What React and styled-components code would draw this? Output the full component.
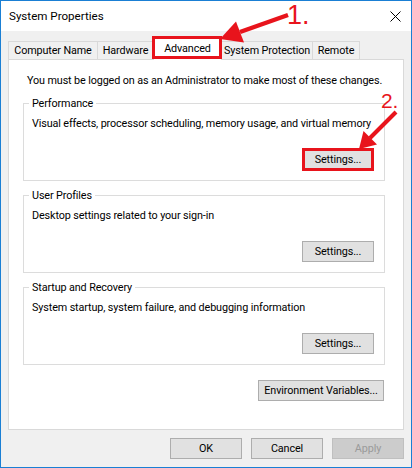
import React from "react";
import styled, { createGlobalStyle } from "styled-components";

const red = "#e8141c";
const uiFont = `Roboto, "Liberation Sans", Arial, sans-serif`;

const Global = createGlobalStyle`
  html, body {
    margin: 0;
    padding: 0;
    background: #ffffff;
  }
`;

const Window = styled.div`
  position: relative;
  width: 412px;
  height: 468px;
  box-sizing: border-box;
  border: 1px solid #1a7fd4;
  display: flex;
  flex-direction: column;
  background: #f0f0f0;
  font-family: ${uiFont};
  font-size: 10.8px;
  letter-spacing: -0.12px;
  color: #000;
`;

const TitleBar = styled.div`
  height: 30px;
  background: #ffffff;
  display: flex;
  align-items: center;
  justify-content: space-between;
  padding: 0 10px 0 8px;
`;

const Title = styled.span`
  font-size: 11.6px;
  letter-spacing: 0;
  line-height: 16px;
`;

const Body = styled.div`
  flex: 1;
  display: flex;
  flex-direction: column;
  padding: 6px 7px 0;
`;

const TabStrip = styled.div`
  position: relative;
  z-index: 1;
  display: flex;
  align-items: flex-end;
  height: 22px;
`;

const Tab = styled.div`
  position: relative;
  box-sizing: border-box;
  width: ${(p) => p.$w}px;
  height: ${(p) => (p.$active ? 23 : 18)}px;
  margin-left: -1px;
  margin-bottom: ${(p) => (p.$active ? -1 : 0)}px;
  padding-bottom: ${(p) => (p.$active ? 2 : 0)}px;
  border: 1px solid #d9d9d9;
  border-bottom: none;
  background: ${(p) => (p.$active ? "#ffffff" : "#f0f0f0")};
  z-index: ${(p) => (p.$active ? 2 : 1)};
  display: flex;
  align-items: center;
  justify-content: center;
  white-space: nowrap;

  &:first-child {
    margin-left: 0;
  }

  ${(p) =>
    p.$mark &&
    `
    &::after {
      content: "";
      position: absolute;
      top: -2px;
      left: -2px;
      right: -1px;
      bottom: 1px;
      border: 3px solid ${red};
    }
  `}
`;

const Panel = styled.div`
  box-sizing: border-box;
  height: 371px;
  background: #ffffff;
  border: 1px solid #d9d9d9;
  padding: 13px 18px 0 14px;
`;

const Notice = styled.p`
  margin: 0 0 7px;
  padding-left: 4px;
  line-height: 16px;
  white-space: nowrap;
`;

const Group = styled.fieldset`
  margin: 0 0 7px;
  padding: 5px 10px 10px 8px;
  border: 1px solid #dcdcdc;
  min-width: 0;
`;

const Legend = styled.legend`
  padding: 0 3px;
  margin-left: -3px;
  line-height: 15px;
`;

const Desc = styled.p`
  margin: 0;
  line-height: 16px;
  white-space: nowrap;
`;

const ButtonRow = styled.div`
  display: flex;
  justify-content: flex-end;
  margin-top: ${(p) => p.$top || 17}px;
  margin-right: ${(p) => p.$right || 0}px;
`;

const Button = styled.button`
  position: relative;
  box-sizing: border-box;
  width: ${(p) => p.$w || 72}px;
  height: 21px;
  padding: 0;
  border: 1px solid ${(p) => (p.disabled ? "#bfbfbf" : "#adadad")};
  background: ${(p) => (p.disabled ? "#cccccc" : "#e1e1e1")};
  color: ${(p) => (p.disabled ? "#9a9a9a" : "#000")};
  font-family: ${uiFont};
  font-size: 10.8px;
  letter-spacing: -0.12px;
  white-space: nowrap;

  ${(p) =>
    p.$mark &&
    `
    &::after {
      content: "";
      position: absolute;
      top: -2px;
      left: -1px;
      right: -1px;
      bottom: -2px;
      border: 3px solid ${red};
    }
  `}
`;

const Footer = styled.div`
  display: flex;
  justify-content: flex-end;
  gap: 9px;
  padding-top: 8px;
`;

const Overlay = styled.svg`
  position: absolute;
  top: -1px;
  left: -1px;
  width: 412px;
  height: 468px;
  pointer-events: none;
  z-index: 5;
`;

const CloseIcon = () => (
  <svg width="11" height="11" viewBox="0 0 11 11">
    <path d="M0.5 0.5 L10.5 10.5 M10.5 0.5 L0.5 10.5" stroke="#000" strokeWidth="1" fill="none" />
  </svg>
);

const tabs = [
  { label: "Computer Name", w: 90 },
  { label: "Hardware", w: 57 },
  { label: "Advanced", w: 69, active: true },
  { label: "System Protection", w: 92 },
  { label: "Remote", w: 48 },
];

const groups = [
  {
    title: "Performance",
    text: "Visual effects, processor scheduling, memory usage, and virtual memory",
    mark: true,
  },
  { title: "User Profiles", text: "Desktop settings related to your sign-in" },
  {
    title: "Startup and Recovery",
    text: "System startup, system failure, and debugging information",
  },
];

function App() {
  return (
    <>
      <Global />
      <Window>
        <TitleBar>
          <Title>System Properties</Title>
          <CloseIcon />
        </TitleBar>
        <Body>
          <TabStrip>
            {tabs.map((t) => (
              <Tab key={t.label} $w={t.w} $active={t.active} $mark={t.active}>
                {t.label}
              </Tab>
            ))}
          </TabStrip>
          <Panel>
            <Notice>
              You must be logged on as an Administrator to make most of these changes.
            </Notice>
            {groups.map((g) => (
              <Group key={g.title}>
                <Legend>{g.title}</Legend>
                <Desc>{g.text}</Desc>
                <ButtonRow>
                  <Button $mark={g.mark}>Settings...</Button>
                </ButtonRow>
              </Group>
            ))}
            <ButtonRow $top={15} $right={1}>
              <Button $w={126}>Environment Variables...</Button>
            </ButtonRow>
          </Panel>
          <Footer>
            <Button>OK</Button>
            <Button>Cancel</Button>
            <Button disabled>Apply</Button>
          </Footer>
        </Body>

        <Overlay viewBox="0 0 412 468">
          <line x1="288" y1="15" x2="240" y2="32" stroke={red} strokeWidth="4.5" />
          <polygon points="220,39 244,42.5 236,21.5" fill={red} />
          <text x="287" y="24" fill={red} fontSize="27" fontFamily='"Liberation Sans", Arial, sans-serif'>
            1.
          </text>
          <line x1="396" y1="112" x2="370" y2="138" stroke={red} strokeWidth="4" />
          <polygon points="359,149 377,144.5 363.5,131" fill={red} />
          <text x="381" y="108" fill={red} fontSize="21" fontFamily='"Liberation Sans", Arial, sans-serif'>
            2.
          </text>
        </Overlay>
      </Window>
    </>
  );
}

export default App;
